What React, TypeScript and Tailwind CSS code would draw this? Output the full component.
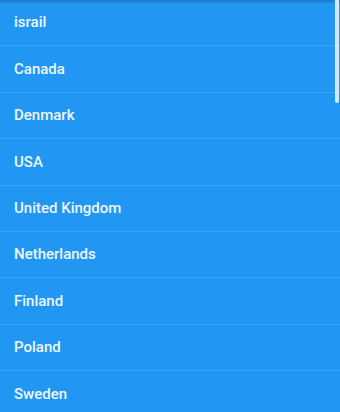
import React from 'react';

const countries = [
  'israil',
  'Canada',
  'Denmark',
  'USA',
  'United Kingdom',
  'Netherlands',
  'Finland',
  'Poland',
  'Sweden',
];

const App: React.FC = () => {
  return (
    <div className="relative w-[340px] h-[412px] overflow-hidden bg-[#2196f3] font-['Roboto','Liberation_Sans',sans-serif]">
      {/* top shadow */}
      <div className="absolute inset-x-0 top-0 h-[4px] bg-gradient-to-b from-[#1a78c4] to-transparent z-10"></div>

      <ul className="flex flex-col">
        {countries.map((name) => (
          <li
            key={name}
            className="h-[46.4px] shrink-0 flex items-center px-[14px] border-b border-[#3ea3f5] text-[15px] font-medium text-[#eef6fe]"
          >
            {name}
          </li>
        ))}
      </ul>

      {/* scrollbar */}
      <div className="absolute right-[1px] top-0 w-[4px] h-[103px] rounded-b-full bg-[#d3e8fc] z-20"></div>
    </div>
  );
};

export default App;
